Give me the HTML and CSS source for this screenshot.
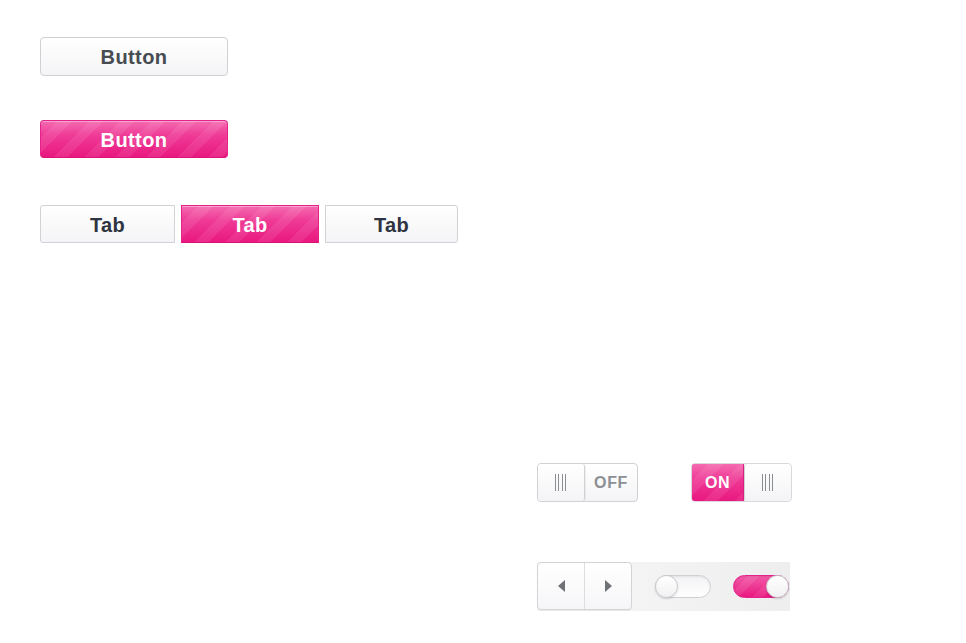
FILE: index.html
```html
<!DOCTYPE html>
<html>
<head>
<meta charset="utf-8">
<link rel="stylesheet" href="styles.css">
</head>
<body>
<div class="page">
  <div class="left">
    <div class="btn">Button</div>
    <div class="btn pink">Button</div>
    <div class="tabs">
      <div class="tab first">Tab</div>
      <div class="tab pink active">Tab</div>
      <div class="tab last">Tab</div>
    </div>
  </div>
  <div class="right">
    <div class="switch-row">
      <div class="switch">
        <div class="knob"><span class="grip"></span></div>
        <div class="label off">OFF</div>
      </div>
      <div class="switch on">
        <div class="label onlabel">ON</div>
        <div class="knob"><span class="grip"></span></div>
      </div>
    </div>
    <div class="strip">
      <div class="arrows">
        <div class="arrow"><span class="tri left-tri"></span></div>
        <div class="arrow"><span class="tri right-tri"></span></div>
      </div>
      <div class="toggle"><span class="dot"></span></div>
      <div class="toggle tog-on"><span class="dot"></span></div>
    </div>
  </div>
</div>
</body>
</html>
```

FILE: styles.css
```css
html, body {
  margin: 0;
  padding: 0;
  background: #ffffff;
}
body {
  font-family: "Liberation Sans", Arial, sans-serif;
}
.page {
  padding: 37px 0 0 40px;
  display: flex;
  flex-direction: column;
}
.left {
  display: flex;
  flex-direction: column;
  align-items: flex-start;
}
.btn {
  box-sizing: border-box;
  width: 188px;
  height: 39px;
  border: 1px solid #cfd1d5;
  border-radius: 4px;
  background: linear-gradient(#ffffff, #f4f4f6);
  box-shadow: inset 0 1px 0 #ffffff;
  color: #474b52;
  font-weight: bold;
  font-size: 20px;
  letter-spacing: 0.4px;
  display: flex;
  align-items: center;
  justify-content: center;
  padding-top: 2px;
}
.btn.pink, .tab.pink {
  border-color: #e3228a;
  border-bottom-color: #d9137a;
  color: #ffffff;
  background:
    repeating-linear-gradient(135deg, rgba(255,255,255,0) 0 12px, rgba(255,255,255,0.08) 12px 22px),
    linear-gradient(#f46bb0, #ef3a96 40%, #e9187f);
  box-shadow: inset 0 1px 0 rgba(255,255,255,0.35);
}
.left > .pink {
  margin-top: 44px;
  height: 38px;
}
.tabs {
  margin-top: 47px;
  display: flex;
  gap: 6px;
}
.tab {
  box-sizing: border-box;
  height: 38px;
  border: 1px solid #d0d2d6;
  background: linear-gradient(#ffffff, #f4f4f6);
  color: #2e3440;
  font-weight: bold;
  font-size: 20px;
  letter-spacing: 0.3px;
  display: flex;
  align-items: center;
  justify-content: center;
  padding-top: 2px;
}
.tab.first {
  width: 135px;
  border-radius: 3px 0 0 3px;
}
.tab.active {
  width: 138px;
}
.tab.last {
  width: 133px;
  border-radius: 0 3px 3px 0;
}
.right {
  margin-top: 220px;
  margin-left: 497px;
  display: flex;
  flex-direction: column;
}
.switch-row {
  display: flex;
  gap: 53px;
}
.switch {
  box-sizing: border-box;
  width: 101px;
  height: 39px;
  border: 1px solid #cfd1d5;
  border-radius: 4px;
  display: flex;
  overflow: hidden;
  background: linear-gradient(#ffffff, #f4f4f6);
}
.knob {
  box-sizing: border-box;
  width: 47px;
  height: 100%;
  background: linear-gradient(#ffffff, #f4f4f6);
  border-right: 1px solid #cfd1d5;
  border-radius: 3px;
  display: flex;
  align-items: center;
  justify-content: center;
  box-shadow: 1px 0 1px rgba(0,0,0,0.06);
}
.switch.on .knob {
  border-right: none;
  border-left: 1px solid #cfd1d5;
  box-shadow: -1px 0 1px rgba(0,0,0,0.06);
}
.grip {
  width: 12px;
  height: 17px;
  background: repeating-linear-gradient(90deg, #8a8d92 0 1px, transparent 1px 3.5px);
}
.label {
  flex: 1;
  display: flex;
  align-items: center;
  justify-content: center;
  font-weight: bold;
  font-size: 16px;
  letter-spacing: 0.6px;
  padding-top: 1px;
}
.off {
  color: #8c8f94;
}
.switch.on {
  border-color: #d9d9dd;
}
.onlabel {
  color: #ffffff;
  margin: -1px 0 -1px -1px;
  border: 1px solid #e3228a;
  border-radius: 4px 0 0 4px;
  background:
    repeating-linear-gradient(135deg, rgba(255,255,255,0) 0 12px, rgba(255,255,255,0.08) 12px 22px),
    linear-gradient(#f46bb0, #ef3a96 40%, #e9187f);
}
.strip {
  margin-top: 60px;
  width: 253px;
  height: 49px;
  background: linear-gradient(90deg, #f7f7f8, #eeeeef);
  display: flex;
  align-items: center;
}
.arrows {
  box-sizing: border-box;
  width: 95px;
  height: 48px;
  align-self: flex-start;
  border: 1px solid #d3d4d8;
  border-radius: 4px;
  background: linear-gradient(#ffffff, #f6f6f8);
  display: flex;
  box-shadow: 0 1px 1px rgba(0,0,0,0.06);
}
.arrow {
  flex: 1;
  display: flex;
  align-items: center;
  justify-content: center;
}
.arrow + .arrow {
  border-left: 1px solid #dcdde0;
}
.tri {
  width: 0;
  height: 0;
  border-top: 6px solid transparent;
  border-bottom: 6px solid transparent;
}
.left-tri {
  border-right: 7px solid #6e7176;
}
.right-tri {
  border-left: 7px solid #6e7176;
}
.toggle {
  box-sizing: border-box;
  margin-left: 23px;
  width: 56px;
  height: 23px;
  border: 1px solid #cfd0d4;
  border-radius: 12px;
  background: linear-gradient(#f3f3f5, #ffffff);
  display: flex;
  align-items: center;
  box-shadow: inset 0 1px 2px rgba(0,0,0,0.08);
}
.dot {
  box-sizing: border-box;
  width: 23px;
  height: 23px;
  margin-left: -1px;
  border-radius: 50%;
  border: 1px solid #c8c9cd;
  background: linear-gradient(#ffffff, #f1f1f3);
  box-shadow: 0 1px 2px rgba(0,0,0,0.15);
}
.tog-on {
  margin-left: 22px;
  justify-content: flex-end;
  border-color: #e3228a;
  background:
    repeating-linear-gradient(135deg, rgba(255,255,255,0) 0 10px, rgba(255,255,255,0.08) 10px 18px),
    linear-gradient(#f25aa8, #e9187f);
}
.tog-on .dot {
  margin-left: 0;
  margin-right: -1px;
}
```
